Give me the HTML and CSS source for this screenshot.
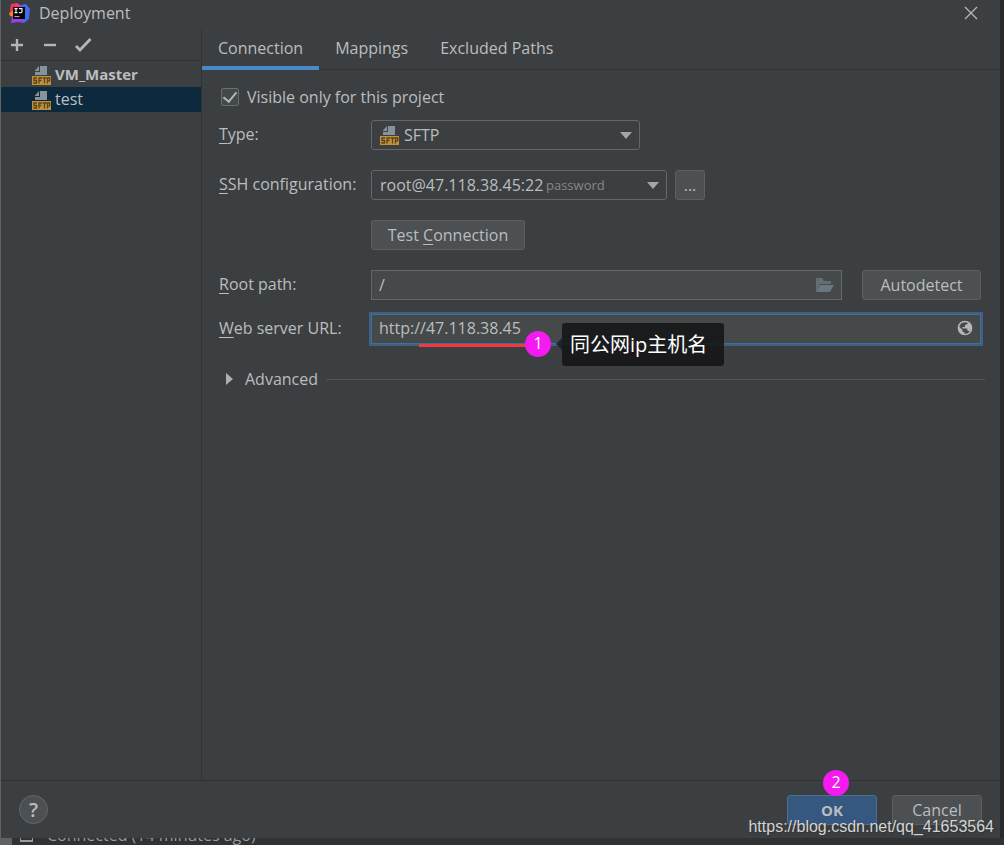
FILE: index.html
```html
<!DOCTYPE html>
<html lang="en">
<head>
<meta charset="utf-8">
<title>Deployment</title>
<link rel="stylesheet" href="styles.css">
</head>
<body>
<svg class="defs" aria-hidden="true">
  <symbol id="sftp" viewBox="0 0 19 20">
    <path d="M8 1h7v9H3V7h5z" fill="#87939a"/>
    <path d="M7 1v5H2.500z" fill="#87939a"/>
    <path d="M0 11h19v9H0z" fill="#c29138"/>
    <path d="M5 13H2v2.500h2.500V18H1.200M10 13H7v5.500M7 15.500h2.500M10.600 13h4M12.500 13v5.500M15.500 18.500V13h2.200v2.800h-2.200" fill="none" stroke="#5a441d" stroke-width="1.3"/>
  </symbol>
</svg>
<main class="dialog">
  <header class="titlebar">
    <svg class="logo" viewBox="0 0 21 21" aria-hidden="true">
      <path d="M2 1l6-1 5 4-3 8-8 1-1-6z" fill="#f8315b"/>
      <path d="M0 10l6-3v7l-5-1z" fill="#fc801d"/>
      <path d="M12 2l5-1 4 5-1 10-5 4-6-4z" fill="#426cf0"/>
      <path d="M3 14l6-3 6 9-6-1-7 1z" fill="#a03cf0"/>
      <path d="M8 0l6 4-7 2z" fill="#e33a9b"/>
      <path d="M4 4h12v12H4z" fill="#050505"/>
      <path d="M5.500 5.600h3M7 5.600v4M5.500 9.600h3M10 5.600h3v3.200c0 1-2 1.100-3 .6" fill="none" stroke="#fff" stroke-width="1.1"/>
      <path d="M5.500 13.600h5" stroke="#bbb"/>
    </svg>
    <h1 class="title">Deployment</h1>
    <button class="close" type="button" aria-label="Close"><svg viewBox="0 0 14 14" width="14" height="14"><path d="M1 1l12 12M13 1L1 13" stroke="#b5b7b8" stroke-width="1.3"/></svg></button>
  </header>
  <div class="body">
    <aside class="sidebar">
      <div class="tools">
        <button class="tool" type="button" aria-label="Add"><svg viewBox="0 0 16 16" width="16" height="16"><path d="M8 2v12M2 8h12" stroke="#b4b6b8" stroke-width="2.4"/></svg></button>
        <button class="tool" type="button" aria-label="Remove"><svg viewBox="0 0 16 16" width="16" height="16"><path d="M2 8h12" stroke="#b4b6b8" stroke-width="2.4"/></svg></button>
        <button class="tool" type="button" aria-label="Use as default"><svg viewBox="0 0 18 16" width="18" height="16"><path d="M1 9l4 4L15.500 2" fill="none" stroke="#b4b6b8" stroke-width="2.8"/></svg></button>
      </div>
      <ul class="servers">
        <li class="server"><svg class="sftp"><use href="#sftp"/></svg><span class="server-name default">VM_Master</span></li>
        <li class="server selected"><svg class="sftp"><use href="#sftp"/></svg><span class="server-name">test</span></li>
      </ul>
    </aside>
    <section class="content">
      <nav class="tabs">
        <a class="tab active" href="#connection">Connection</a>
        <a class="tab" href="#mappings">Mappings</a>
        <a class="tab" href="#excluded">Excluded Paths</a>
      </nav>
      <form class="form" id="connection">
        <label class="visible"><input class="check" type="checkbox" checked>Visible only for this project</label>
        <div class="row">
          <label class="label" for="type"><u>T</u>ype:</label>
          <div class="combo combo-type">
            <select class="select with-icon" id="type"><option>SFTP</option></select>
            <svg class="sftp combo-icon"><use href="#sftp"/></svg>
            <svg class="arrow" viewBox="0 0 12 7"><path d="M0 0h12L6 7z" fill="#a3a6a8"/></svg>
          </div>
        </div>
        <div class="row">
          <label class="label" for="ssh"><u>S</u>SH configuration:</label>
          <div class="combo combo-ssh">
            <select class="select" id="ssh"><option>root@47.118.38.45:22</option></select>
            <span class="hint">password</span>
            <svg class="arrow" viewBox="0 0 12 7"><path d="M0 0h12L6 7z" fill="#a3a6a8"/></svg>
          </div>
          <button class="button more" type="button">...</button>
        </div>
        <div class="row indented">
          <button class="button test" type="button">Test <u>C</u>onnection</button>
        </div>
        <div class="row">
          <label class="label" for="root"><u>R</u>oot path:</label>
          <div class="field">
            <input class="input" id="root" type="text" value="/">
            <svg class="field-icon" viewBox="0 0 20 16"><path d="M1 15V1h6l2 3h7v3H5z" fill="#616e75"/><path d="M5 8h14l-4 7H1z" fill="#6a777e"/></svg>
          </div>
          <button class="button autodetect" type="button">Autodetect</button>
        </div>
        <div class="row url-row">
          <label class="label" for="url"><u>W</u>eb server URL:</label>
          <div class="field">
            <input class="input focused" id="url" type="text" value="http://47.118.38.45">
            <svg class="field-icon globe" viewBox="0 0 16 16"><circle cx="8" cy="8" r="6.600" fill="none" stroke="#b4b6b8" stroke-width="1.500"/><path d="M1.500 6l4 4v1.500l2 1V15C4 15 1 12 1.500 6zM8 1.500l3 .5-.5 2L8 5v2H5.500v1.500H10l.5 2 2 1L15 8l-1-3-2.500-3z" fill="#b4b6b8"/></svg>
            <span class="mark-line"></span>
            <span class="badge badge-one">1</span>
            <span class="note" lang="zh">同公网ip主机名</span>
          </div>
        </div>
        <div class="advanced">
          <button class="expander" type="button"><svg viewBox="0 0 7 12" width="7" height="12"><path d="M0 0l7 6-7 6z" fill="#adafb1"/></svg>Advanced</button>
          <span class="rule"></span>
        </div>
      </form>
    </section>
  </div>
  <footer class="footer">
    <button class="help" type="button" aria-label="Help">?</button>
    <div class="ok-wrap">
      <button class="button ok" type="button">OK</button>
      <span class="badge badge-two">2</span>
    </div>
    <button class="button cancel" type="button">Cancel</button>
    <span class="watermark">https://blog.csdn.net/qq_41653564</span>
  </footer>
</main>
<div class="status"><span class="status-box"></span><span>Connected (14 minutes ago)</span></div>
</body>
</html>
```
FILE: styles.css
```css
* { box-sizing: border-box; }
body {
  margin: 0;
  height: 100vh;
  display: flex;
  flex-direction: column;
  overflow: hidden;
  background: linear-gradient(to right, #606264 50%, #292929 50%);
  color: #bbbdbf;
  font-family: "Open Sans", "Noto Sans CJK SC", sans-serif;
  font-size: 16px;
  line-height: 20px;
}
button, input, select { font: inherit; color: inherit; margin: 0; }
button { padding: 0; border: 0; background: none; }
svg { display: block; flex: none; }
u { text-underline-offset: 3px; text-decoration-thickness: 1px; }
.defs { position: absolute; width: 0; height: 0; }
.dialog {
  flex: 1;
  min-height: 0;
  margin: 0 4px 0 1px;
  display: flex;
  flex-direction: column;
  background: #3c3f41;
}
.titlebar { height: 30px; padding: 0 22px 4px 8px; display: flex; align-items: center; gap: 9px; }
.logo { width: 21px; height: 21px; }
.title { flex: 1; margin: 0; font-size: 16px; font-weight: 400; }
.close { width: 14px; height: 14px; }
.body { flex: 1; min-height: 0; display: flex; }
.sidebar { width: 201px; border-right: 1px solid #303234; }
.tools { height: 31px; padding: 0 8px; display: flex; align-items: center; gap: 17px; border-bottom: 1px solid #303234; }
.servers { list-style: none; margin: 0; padding: 1px 0 0; }
.server { height: 25px; padding-left: 31px; display: flex; align-items: center; gap: 4px; }
.server-name { padding-bottom: 2px; }
.sftp { width: 19px; height: 20px; }
.default { font-size: 15px; font-weight: 700; }
.selected { background: #0d293e; }
.content { flex: 1; min-width: 0; }
.tabs { height: 40px; display: flex; border-bottom: 1px solid #303234; }
.tab { height: 40px; padding: 8px 16px 0; color: inherit; text-decoration: none; }
.active { border-bottom: 4px solid #4a88c7; }
.form { padding: 17px 19px 0 17px; }
.visible { height: 20px; margin-bottom: 13px; padding-left: 2px; display: flex; align-items: center; gap: 8px; }
.check { appearance: none; width: 18px; height: 18px; margin: 0; border: 1px solid #6b6d6e; border-radius: 2px; background: #43494a; display: grid; place-items: center; }
.check:checked::before { content: ""; width: 6px; height: 11px; margin-bottom: 3px; border: solid #b4b6b8; border-width: 0 2px 2px 0; transform: rotate(40deg); }
.row { height: 30px; margin-bottom: 20px; display: flex; align-items: center; }
.label { width: 152px; flex: none; padding-bottom: 2px; }
.indented { padding-left: 152px; }
.combo { position: relative; }
.combo-type { width: 269px; }
.combo-ssh { width: 296px; margin-right: 8px; }
.select { appearance: none; width: 100%; height: 30px; display: block; padding: 0 28px 0 8px; border: 1px solid #646669; border-radius: 3px; background: #3c3f41; outline: 0; }
.with-icon { padding-left: 32px; }
.combo-icon { position: absolute; left: 9px; top: 5px; }
.arrow { position: absolute; right: 8px; top: 12px; width: 12px; height: 7px; }
.hint { position: absolute; left: 175px; top: 5px; font-size: 13px; color: #858789; pointer-events: none; }
.button { height: 30px; border: 1px solid #5e6060; border-radius: 3px; background: #4c5052; }
.more { width: 30px; }
.test { width: 154px; }
.field { position: relative; flex: 1; min-width: 0; }
.input { width: 100%; height: 30px; display: block; padding: 0 36px 0 7px; border: 1px solid #646669; border-radius: 0; background: #45494a; outline: 0; }
.field-icon { position: absolute; right: 7px; top: 7px; width: 20px; height: 16px; }
.globe { right: 8px; top: 6px; width: 16px; }
.autodetect { width: 119px; margin-left: 20px; }
.url-row { margin: -6px 0 25px; }
.focused { padding-bottom: 2px; border-color: #466d94; box-shadow: 0 0 0 2px #3d6185; }
.mark-line { position: absolute; left: 48px; top: 30px; width: 110px; height: 3px; background: #f4393c; }
.badge { position: absolute; width: 26px; height: 26px; border-radius: 50%; background: #f41af0; color: #fff; text-align: center; line-height: 24px; }
.badge-one { left: 154px; top: 17px; }
.badge-two { left: 36px; top: -25px; }
.note { position: absolute; left: 191px; top: 9px; height: 43px; padding: 0 17px 0 8px; border-radius: 3px; background: rgba(20, 21, 22, 0.88); color: #fff; font-size: 20px; line-height: 43px; white-space: nowrap; }
.note::before { content: ""; position: absolute; left: -6px; top: 15px; border: 6px solid transparent; border-left: 0; border-right-color: #1c2530; }
.advanced { display: flex; align-items: center; gap: 8px; margin-right: -4px; }
.expander { display: flex; align-items: center; gap: 12px; padding-left: 7px; }
.rule { flex: 1; height: 1px; background: #515355; }
.footer { position: relative; height: 58px; padding: 0 18px; display: flex; align-items: center; gap: 15px; border-top: 1px solid #303234; }
.help { width: 29px; height: 29px; margin-right: auto; border: 1px solid #65686a; border-radius: 50%; background: #4c5052; font-size: 20px; font-weight: 600; line-height: 26px; }
.ok-wrap { position: relative; }
.ok { width: 90px; display: block; background: #365880; border-color: #4c708c; font-size: 15px; font-weight: 700; }
.cancel { width: 90px; }
.watermark { position: absolute; right: 6px; bottom: 1px; color: #d3d4d5; font-family: "Liberation Sans", Arial, sans-serif; font-size: 16px; text-shadow: 1px 1px 1px #303234; }
.status { height: 7px; margin: 0 0 0 12px; padding-left: 8px; overflow: hidden; display: flex; align-items: flex-end; gap: 14px; background: #303234; color: #999b9d; line-height: 20px; }
.status-box { width: 13px; height: 12px; margin-bottom: 3px; border: 1px solid #999b9d; border-bottom-width: 2px; flex: none; }
```
